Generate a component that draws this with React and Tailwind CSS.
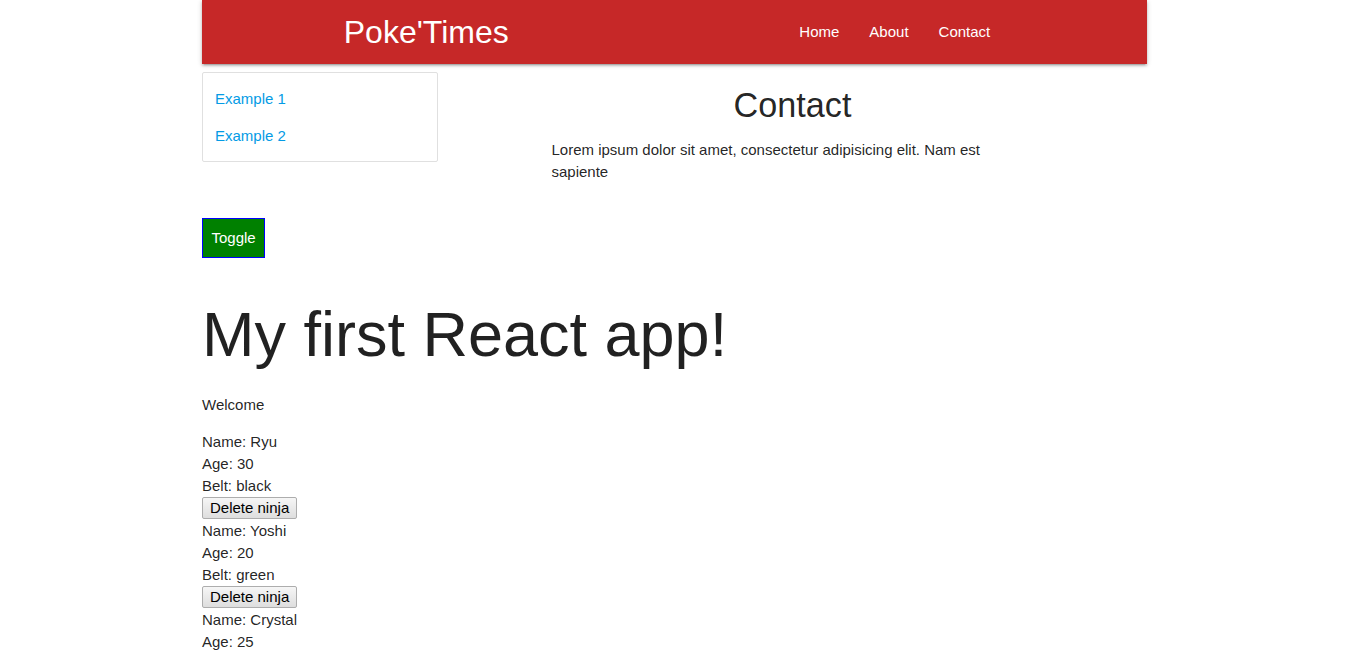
import React, { useState } from 'react';

const ninjas = [
  { name: 'Ryu', age: 30, belt: 'black', id: 1 },
  { name: 'Yoshi', age: 20, belt: 'green', id: 2 },
  { name: 'Crystal', age: 25, belt: 'pink', id: 3 },
];

const App = () => {
  const [list, setList] = useState(ninjas);

  const deleteNinja = (id) => {
    setList(list.filter((n) => n.id !== id));
  };

  return (
    <div className="min-h-screen bg-white text-[15px] leading-[1.5] text-[rgba(0,0,0,0.87)] font-['Liberation_Sans',Arial,sans-serif]">
      <div className="w-[945px] mx-auto">
        <nav className="h-16 bg-[#c62828] text-white shadow-[0_2px_2px_0_rgba(0,0,0,0.14),0_3px_1px_-2px_rgba(0,0,0,0.12),0_1px_5px_0_rgba(0,0,0,0.2)]">
          <div className="w-[661.5px] h-full mx-auto flex items-center justify-between">
            <a href="#" className="text-[32px] leading-[64px]">Poke'Times</a>
            <ul className="flex">
              <li><a href="#" className="block px-[15px] leading-[64px]">Home</a></li>
              <li><a href="#" className="block px-[15px] leading-[64px]">About</a></li>
              <li><a href="#" className="block px-[15px] leading-[64px]">Contact</a></li>
            </ul>
          </div>
        </nav>

        <div className="flex">
          <div className="w-[236px]">
            <ul className="mt-2 pt-2 pb-[6px] border border-[#e0e0e0] rounded-[2px]">
              <li className="h-[37px] flex items-center px-3">
                <a href="#" className="text-[#039be5]">Example 1</a>
              </li>
              <li className="h-[37px] flex items-center px-3">
                <a href="#" className="text-[#039be5]">Example 2</a>
              </li>
            </ul>
          </div>
          <div className="flex-1">
            <h4 className="text-center text-[34.2px] leading-[1.1] mt-[22.8px] mb-[14.5px]">Contact</h4>
            <p className="w-[482px] mx-auto">
              Lorem ipsum dolor sit amet, consectetur adipisicing elit. Nam est sapiente
            </p>
          </div>
        </div>

        <button className="mt-[34px] h-10 px-[8.5px] border border-[#0000ff] bg-[#008000] text-white">
          Toggle
        </button>

        <h1 className="mt-[42px] mb-[25px] text-[63px] leading-[1.1]">My first React app!</h1>
        <p className="mb-[14px]">Welcome</p>

        <div className="leading-[22px]">
          {list.map((ninja) => (
            <div key={ninja.id}>
              <div>Name: {ninja.name}</div>
              <div>Age: {ninja.age}</div>
              <div>Belt: {ninja.belt}</div>
              <button
                onClick={() => deleteNinja(ninja.id)}
                className="block h-[22px] mb-px px-[7px] leading-[20px] border border-[#adadad] rounded-[2px] bg-gradient-to-b from-[#f6f6f6] to-[#dedede] text-black"
              >
                Delete ninja
              </button>
            </div>
          ))}
        </div>
      </div>
    </div>
  );
};

export default App;
